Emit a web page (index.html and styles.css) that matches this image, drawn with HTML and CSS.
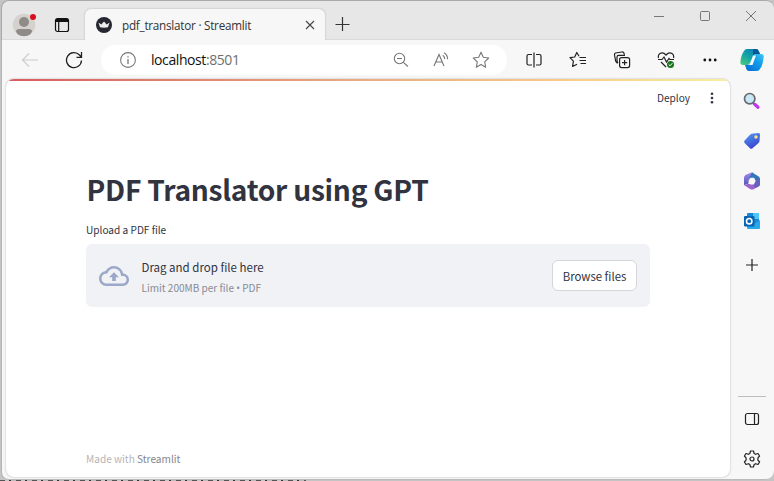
FILE: index.html
```html
<!DOCTYPE html>
<html lang="en">
<head>
<meta charset="utf-8">
<title>pdf_translator · Streamlit</title>
<link rel="stylesheet" href="styles.css">
</head>
<body>
<div class="window">
  <header class="titlebar">
    <div class="profile"><svg width="24" height="24" viewBox="0 0 24 24"><defs><clipPath id="av"><circle cx="12" cy="12" r="11.3"/></clipPath></defs><circle cx="12" cy="12" r="11.3" fill="#d5d2ce"/><g clip-path="url(#av)" fill="#8f8b88"><circle cx="12" cy="9" r="5"/><path d="M4 18.500q0-2.500 3-2.500h10q3 0 3 2.500q-2 5-8 5t-8-5"/></g><circle cx="21" cy="4" r="3" fill="#d9101e"/></svg></div>
    <div class="workspace"><svg width="16" height="16" viewBox="0 0 16 16" fill="none" stroke="#111" stroke-width="1.2"><rect x="1.500" y="1.500" width="13" height="13" rx="2"/><path d="M2 3.500h12" stroke-width="3"/><path d="M4.700 5v9"/></svg></div>
    <div class="tab">
      <svg class="favicon" width="16" height="16" viewBox="0 0 16 16"><circle cx="8" cy="8" r="8" fill="#262730"/><path d="M2.500 5.500l2.800 2L8 4.500l2.700 3 2.800-2-1.500 4.800q-4 .9-8 0z" fill="#eee"/></svg>
      <span class="tab-title">pdf_translator · Streamlit</span>
      <svg class="tab-close" width="10" height="10" viewBox="0 0 10 10" stroke="#444" stroke-width="1.100"><path d="M1 1l8 8M9 1l-8 8"/></svg>
    </div>
    <svg class="new-tab" width="16" height="16" viewBox="0 0 16 16" stroke="#333" stroke-width="1.200"><path d="M8.500 1v14M1.500 8.500h14"/></svg>
    <div class="controls">
      <span><svg width="12" height="12" viewBox="0 0 12 12" stroke="#777"><path d="M1 6.500h10"/></svg></span>
      <span><svg width="12" height="12" viewBox="0 0 12 12" fill="none" stroke="#777"><rect x="1.500" y="1.500" width="9" height="9" rx="1"/></svg></span>
      <span><svg width="12" height="12" viewBox="0 0 12 12" stroke="#777"><path d="M1 1l10 10M11 1L1 11"/></svg></span>
    </div>
  </header>

  <nav class="toolbar">
    <span class="slot back"><svg width="18" height="18" viewBox="0 0 18 18" fill="none" stroke="#ccc" stroke-width="1.100"><path d="M17 9H1.500M8 2.500L1.500 9L8 15.500"/></svg></span>
    <span class="slot"><svg width="18" height="18" viewBox="0 0 18 18" fill="none" stroke="#222" stroke-width="1.300"><path d="M16.500 9.500a7.500 7.500 0 1 1-2-5.500l2 2.200M16.500 1v5.300h-5"/></svg></span>
    <div class="address">
      <svg class="info" width="18" height="18" viewBox="0 0 18 18" fill="none" stroke="#777" stroke-width="1.100"><circle cx="9" cy="9" r="7.400"/><path d="M9 8v5M9 5.200v1.300" stroke-width="1.300"/></svg>
      <span class="url">localhost<span class="port">:8501</span></span>
      <div class="address-actions">
        <span><svg width="16" height="16" viewBox="0 0 16 16" fill="none" stroke="#777" stroke-width="1.100"><circle cx="6.500" cy="6.500" r="5.200"/><path d="M4 6.500h5M10.300 10.300l4.700 4.200"/></svg></span>
        <span><svg width="18" height="18" viewBox="0 0 18 18" fill="none" stroke="#777" stroke-width="1.100"><path d="M2 15L7 3.500L12 15M3.800 11h6.400M10.700 4.300q2 1.200 2 3.700M12 1.800q3.600 2 3.600 6.500"/></svg></span>
        <span><svg width="18" height="18" viewBox="0 0 18 18" fill="none" stroke="#777" stroke-width="1.100" stroke-linejoin="round"><path d="M9 1.300l2.300 5 5.400.7-4 3.800 1 5.500L9 13.600l-4.700 2.700 1-5.500-4-3.800 5.400-.7z"/></svg></span>
      </div>
    </div>
    <div class="tools">
      <span><svg width="18" height="18" viewBox="0 0 18 18" fill="none" stroke="#222" stroke-width="1.200"><path d="M7 3.500H3.500q-1.500 0-1.500 1.500v7.500q0 1.500 1.500 1.500h3.500M11 3.500h3.500q1.500 0 1.500 1.500v7.500q0 1.500-1.500 1.500H11M9 1.500v15"/></svg></span>
      <span><svg width="18" height="18" viewBox="0 0 18 18" fill="none" stroke="#222" stroke-width="1.200" stroke-linejoin="round"><path d="M10 5.300L7.800 1.500L5.700 6L1 6.700l3.400 3.500-.8 5.300L8 13.200M10.500 6.500H17M10.500 9.500H17M11.500 12.500H17"/></svg></span>
      <span><svg width="18" height="18" viewBox="0 0 18 18" fill="none" stroke="#222" stroke-width="1.200"><rect x="6.600" y="6.600" width="10" height="10" rx="2"/><path d="M11.600 9v5.200M9 11.600h5.200M4.500 12.500L2.700 10.200L1.500 4q-.3-1.500 1-2L9 1q1.500-.2 2 1.200L11.500 3.500M5 12q-1-1-1-3V6q0-1.600 1.600-1.600H12"/></svg></span>
      <span><svg width="18" height="18" viewBox="0 0 18 18" fill="none" stroke="#222" stroke-width="1.200"><path d="M1.500 7Q.7 4 3 2.500Q6 .5 9 4q3-3.500 6-1.500Q17.300 4 16.500 7M1 8.500h4L7 6l2.500 5L12 7.500l1 1h4M4 11l5 5"/><circle cx="13.500" cy="13.500" r="3.500" fill="#18751c" stroke="none"/><path d="M11.700 13.500l1.300 1.300 2.400-2.600" stroke="#fff" stroke-width="1"/></svg></span>
      <span><svg width="16" height="16" viewBox="0 0 16 16" fill="#111"><circle cx="2.800" cy="8" r="1.400"/><circle cx="8" cy="8" r="1.400"/><circle cx="13.200" cy="8" r="1.400"/></svg></span>
    </div>
  </nav>

  <main class="page">
    <div class="rainbow"></div>
    <div class="app-bar"><span class="deploy">Deploy</span><svg width="4" height="12" viewBox="0 0 4 12" fill="#31333f"><circle cx="2" cy="1.700" r="1.300"/><circle cx="2" cy="6" r="1.300"/><circle cx="2" cy="10.300" r="1.300"/></svg></div>
    <section class="content">
      <h1>PDF Translator using GPT</h1>
      <label class="upload-label">Upload a PDF file</label>
      <div class="dropzone">
        <svg class="cloud" width="30" height="30" viewBox="0 0 24 24" fill="#9ba8c8"><path d="M19.350 10.040A7.490 7.490 0 0 0 12 4C9.110 4 6.600 5.640 5.350 8.040A5.994 5.994 0 0 0 0 14c0 3.310 2.690 6 6 6h13c2.760 0 5-2.240 5-5 0-2.640-2.050-4.780-4.650-4.960zM19 18H6c-2.210 0-4-1.790-4-4 0-2.050 1.530-3.760 3.560-3.970l1.070-.11.500-.95A5.469 5.469 0 0 1 12 6c2.620 0 4.880 1.860 5.390 4.430l.300 1.500 1.530.110A2.980 2.980 0 0 1 22 15c0 1.650-1.350 3-3 3zM8 13h2.550v3h2.900v-3H16l-4-4z"/></svg>
        <div class="drop-text"><span class="drop-title">Drag and drop file here</span><span class="drop-hint">Limit 200MB per file <span class="bullet">•</span> PDF</span></div>
        <button class="browse"><span>Browse files</span></button>
      </div>
    </section>
    <footer class="credit">Made with <b>Streamlit</b></footer>
  </main>

  <aside class="sidebar">
    <div class="copilot"><svg width="24" height="24" viewBox="0 0 24 24"><defs>
      <linearGradient id="ca" x1="0" y1="1" x2=".7" y2="0"><stop stop-color="#50cc78"/><stop offset=".5" stop-color="#14a8a5"/><stop offset="1" stop-color="#087fb7"/></linearGradient>
      <linearGradient id="cb" x1="0" y1="1" x2="1" y2="0"><stop stop-color="#0868d5"/><stop offset=".6" stop-color="#119ce8"/><stop offset="1" stop-color="#42c8ef"/></linearGradient></defs>
      <path d="M7 1h9q2 0 2.700 2L20 6h-4q-2 0-2.700 2L10 15q-.7 2-2.700 2H3q-3 0-2.600-3Q1 7 4 3q1-2 3-2z" fill="url(#ca)"/><path d="M13 1h3q2 0 2.700 2L20 6h-4q-2 0-3 2z" fill="#075897"/><path d="M17 23H9q-2 0-2.700-2L5 17h3q2 0 2.800-2L13 8.500Q14 6 16 6h5q3 0 2.700 3Q23 17 20 21q-1 2-3 2z" fill="url(#cb)"/><path d="M13 7.500h3l-3.500 9.500h-4q1.500-.3 2.200-2.500z" fill="#f2f9fc"/></svg></div>
    <svg width="20" height="20" viewBox="0 0 20 20"><path d="M11 12l2 2" stroke="#666a70" stroke-width="2"/><path d="M13 13.500l3 2.700" stroke="#bd35ec" stroke-width="3.200" stroke-linecap="round"/><circle cx="7.700" cy="7.700" r="5.200" fill="#c9e7f5" stroke="#666a70" stroke-width="1.700"/></svg>
    <svg width="20" height="20" viewBox="0 0 20 20"><defs><linearGradient id="tg" x1="0" y1="0" x2=".5" y2="1"><stop stop-color="#55a1f3"/><stop offset="1" stop-color="#3b43d1"/></linearGradient></defs><path d="M9.500 2.800L16.500 2q1.500 0 1.500 1.500L17.500 10q0 1-1 2l-6 5.300q-1.300 1-2.500 0L2.600 12Q1.500 10.700 2.600 9.500L8 3.700z" fill="url(#tg)"/><circle cx="14" cy="6" r="1.700" fill="#ffe37a"/></svg>
    <svg width="20" height="20" viewBox="0 0 20 20"><defs><linearGradient id="ma" x1="0" y1="0" x2="0" y2="1"><stop stop-color="#a28be8"/><stop offset="1" stop-color="#5556bd"/></linearGradient></defs><path d="M8 2q2-1 4 0L8.500 7 6 13l-4 1V7q0-2 1.500-3z" fill="url(#ma)"/><path d="M10 1.500l6 3.500q2 1 2 3v4l-5-1-1-4H7z" fill="#3475bd"/><path d="M2 14l4-1h6l6-3v3q0 1.500-1.500 2.500L12 18q-2 1-4 0z" fill="#9d62cc"/><path d="M18 8v5q0 1.500-1.500 2.500L13 17l-2-4 2-4z" fill="#6560bd"/><path d="M8.500 6.700h3.500L13.700 10l-1.900 3.500H8.200L6.300 10z" fill="#f8f8fa"/></svg>
    <svg width="20" height="20" viewBox="0 0 20 20"><rect x="5" y="2" width="12" height="15" rx="1" fill="#1687d9"/><path d="M11 2h6v6h-6z" fill="#50c8f4"/><path d="M5 9l7 4 6-4v8q0 1-1 1H6q-1 0-1-1z" fill="#28a8ea"/><rect x="2" y="5" width="10.500" height="10.500" rx="1" fill="#0864b3"/><circle cx="7.200" cy="10.200" r="2.700" fill="none" stroke="#fff" stroke-width="1.600"/></svg>
    <svg width="14" height="14" viewBox="0 0 14 14" stroke="#222" stroke-width="1.200"><path d="M7 1v12M1 7h12"/></svg>
    <div class="sidebar-bottom">
      <svg width="16" height="16" viewBox="0 0 16 16" fill="none" stroke="#222" stroke-width="1.200"><rect x="1.500" y="2.500" width="13" height="11" rx="2"/><path d="M10.500 2.500v11"/></svg>
      <svg width="18" height="18" viewBox="0 0 18 18" fill="none" stroke="#222" stroke-width="1.200" stroke-linejoin="round"><circle cx="9" cy="9" r="2"/><path d="M7.500 1h3l.6 2.400 1.500.9 2.400-.8L16.600 6l-1.700 1.900v2.200l1.700 1.900-1.600 2.500-2.400-.8-1.500.9-.6 2.400h-3l-.6-2.400-1.500-.9-2.400.8L1.400 12l1.700-1.900V7.900L1.400 6 3 3.500l2.400.8 1.500-.9z"/></svg>
    </div>
  </aside>
</div>
</body>
</html>
```
FILE: styles.css
```css
* { box-sizing: border-box; }
body {
  margin: 0;
  height: 481px;
  overflow: hidden;
  padding-left: 1px;
  background: repeating-linear-gradient(90deg, #555 0 5px, #c9c9c9 5px 9px, #333 9px 11px, #bbb 11px 16px) 0 480px / 306px 1px no-repeat, #c4c4c4;
  font-family: "Noto Sans CJK SC", sans-serif;
}
svg { display: block; flex: none; }
.window {
  display: grid;
  grid-template: 40px 39px 398px 3px / 729px 44px;
  width: 773px;
  height: 480px;
  overflow: hidden;
  background: #f7f7f7;
  border-radius: 8px;
  box-shadow: inset 0 1px #aaa, inset 1px 0 #b5b5b5, inset 0 -1px #bbb;
}
.titlebar {
  grid-column: 1 / 3;
  display: flex;
  align-items: flex-start;
  background: #e7e7e7;
  border: 1px solid #aaa;
  border-width: 1px 0 0 1px;
  border-radius: 8px 8px 0 0;
  box-shadow: inset 0 -1px #dadada;
}
.profile { padding: 12px 0 0 10px; }
.workspace { padding: 16px 0 0 18px; }
.tab {
  display: flex;
  align-items: center;
  width: 240px;
  height: 32px;
  margin: 8px 0 0 15px;
  padding: 0 10px 0 11px;
  background: #f7f7f7;
  border-radius: 6px 6px 0 0;
  box-shadow: 0 0 2px #aaa;
}
.tab-title {
  margin: -1px 0 0 10px;
  font: 11.700px/20px "Open Sans", sans-serif;
  letter-spacing: -.24px;
  color: #333;
  white-space: nowrap;
}
.tab-close { margin-left: auto; }
.new-tab { margin: 15px 0 0 9px; }
.controls { display: flex; margin-left: auto; }
.controls span { display: grid; place-items: center; width: 46px; height: 30px; }
.toolbar { display: flex; align-items: center; background: #f7f7f7; box-shadow: inset 1px 0 #b5b5b5; }
.slot { display: grid; place-items: center; flex: none; width: 44px; height: 38px; }
.back { margin-left: 7px; }
.address {
  display: flex;
  align-items: center;
  flex: none;
  width: 406px;
  height: 30px;
  margin-left: 5px;
  padding: 0 6px 0 18px;
  background: #fff;
  border-radius: 15px;
}
.url {
  margin-left: 14px;
  font: 14px/20px "Open Sans", sans-serif;
  letter-spacing: -.42px;
  color: #111;
}
.port { color: #707070; }
.address-actions { display: flex; margin-left: auto; }
.address-actions span { display: grid; place-items: center; width: 40px; }
.tools { display: flex; margin-left: 5px; flex: none; }
.tools span { display: grid; place-items: center; width: 44px; }
.page {
  grid-area: 3 / 1;
  display: flex;
  flex-direction: column;
  margin-left: 5px;
  overflow: hidden;
  background: #fff;
  border-radius: 8px;
  box-shadow: 0 0 2px #aaa;
}
.rainbow { height: 2px; background: linear-gradient(90deg, #d85c61, #e9ad82 50%, #f8ca8b 77%, #f5f0a1); flex: none; }
.app-bar {
  display: flex;
  align-items: center;
  justify-content: flex-end;
  gap: 20px;
  height: 34px;
  padding-right: 16px;
}
.deploy { font-size: 10.100px; line-height: 16px; color: #31333f; }
.content { width: 564px; margin: 52px 0 0 80px; }
h1 {
  margin: 0 0 0 .6px;
  font-size: 28.200px;
  line-height: 44px;
  font-weight: 700;
  letter-spacing: -.28px;
  color: #31333f;
  white-space: nowrap;
}
.upload-label { display: block; margin-top: 10px; font-size: 10.100px; line-height: 18px; color: #31333f; }
.dropzone {
  display: flex;
  align-items: center;
  height: 63px;
  margin-top: 5px;
  padding: 0 13px;
  background: #f0f2f6;
  border-radius: 6px;
}
.drop-text { display: flex; flex-direction: column; gap: 2px; margin: 2px 0 0 12.500px; }
.drop-title { font-size: 11.500px; line-height: 20px; color: #31333f; }
.drop-hint { font-size: 10.050px; line-height: 18px; color: #898b93; }
.bullet { font-family: "Open Sans", sans-serif; }
.browse {
  width: 85px;
  height: 31px;
  margin-left: auto;
  padding: 0;
  background: #fff;
  border: 1px solid #d4d6db;
  border-radius: 6px;
  font: 11.400px/20px "Noto Sans CJK SC", sans-serif;
  color: #31333f;
}
.credit { margin: auto 0 9px 80px; font-size: 10.100px; line-height: 18px; color: #b5b6bb; }
.credit b { font-weight: 400; color: #85868c; }
.sidebar {
  grid-area: 2 / 2 / 5;
  display: flex;
  flex-direction: column;
  align-items: center;
  gap: 20px;
}
.copilot { height: 31px; padding-top: 8px; }
.sidebar > svg:nth-of-type(5) { margin-top: 7px; }
.sidebar-bottom {
  display: flex;
  flex-direction: column;
  align-items: center;
  gap: 23px;
  width: 28px;
  margin: auto 0 12px;
  padding-top: 14px;
  border-top: 1px solid #bdbdbd;
}
```
